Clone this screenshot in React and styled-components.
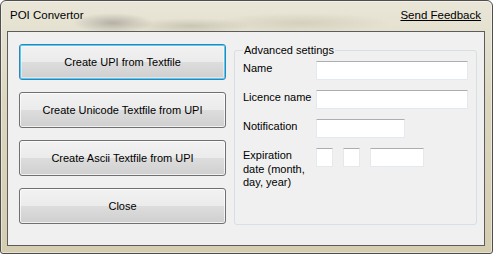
import React from "react";
import styled, { createGlobalStyle } from "styled-components";

const GlobalStyle = createGlobalStyle`
  html, body {
    margin: 0;
    padding: 0;
    background: #ffffff;
  }
  body {
    font-family: "Liberation Sans", Arial, sans-serif;
  }
`;

const Window = styled.div`
  box-sizing: border-box;
  width: 493px;
  height: 254px;
  border: 1px solid #4e4e4e;
  border-radius: 6px 6px 3px 3px;
  background:
    radial-gradient(ellipse 40px 10px at 112px 22px, rgba(120, 118, 110, 0.45), transparent),
    radial-gradient(ellipse 60px 8px at 190px 25px, rgba(150, 145, 125, 0.35), transparent),
    radial-gradient(ellipse 90px 10px at 300px 22px, rgba(170, 165, 140, 0.3), transparent),
    linear-gradient(180deg, #e9e6d8 0%, #dcd6bf 40%, #d4cdb0 100%);
  box-shadow: inset 0 0 0 1px rgba(255, 255, 255, 0.45);
  display: flex;
  flex-direction: column;
  padding: 0 7px 7px 6px;
`;

const TitleBar = styled.div`
  height: 28px;
  display: flex;
  align-items: center;
  justify-content: space-between;
  padding: 0 4px 2px 3px;
  font-size: 11.5px;
  color: #000;
`;

const Title = styled.span``;

const Link = styled.a`
  color: #000;
  text-decoration: underline;
  cursor: pointer;
`;

const Client = styled.div`
  flex: 1;
  border: 1px solid #5c5c5c;
  background: #f0f0f0;
  display: flex;
  gap: 8px;
  padding: 12px 7px 20px 11px;
`;

const ButtonColumn = styled.div`
  width: 207px;
  display: flex;
  flex-direction: column;
  gap: 12px;
`;

const Button = styled.button`
  box-sizing: border-box;
  height: 36px;
  width: 100%;
  font-family: "Liberation Sans", Arial, sans-serif;
  font-size: 11px;
  color: #000;
  border-radius: 3px;
  border: 1px solid ${(p) => (p.$default ? "#3c7fb1" : "#707070")};
  background: linear-gradient(180deg, #f2f2f2 0%, #ebebeb 50%, #dddddd 50%, #cfcfcf 100%);
  box-shadow: ${(p) =>
    p.$default
      ? "inset 0 0 0 1px #48d2fb, inset 0 0 0 2px rgba(255,255,255,0.4)"
      : "inset 0 0 0 1px rgba(255,255,255,0.7)"};
  padding: 0;
`;

const Group = styled.fieldset`
  flex: 1;
  margin: 0;
  border: 1px solid #d5dfe5;
  border-radius: 3px;
  padding: 5px 8px 0 8px;
  display: flex;
  flex-direction: column;
  gap: 10px;
  font-size: 11px;
  color: #000;
`;

const Legend = styled.legend`
  padding: 0 1px;
  font-size: 11px;
`;

const Row = styled.div`
  display: flex;
  align-items: flex-start;
`;

const Label = styled.label`
  width: 73px;
  flex: none;
  line-height: 13.5px;
  padding-top: 1px;
`;

const Inputs = styled.div`
  display: flex;
  gap: 10px;
`;

const Field = styled.input`
  box-sizing: border-box;
  width: ${(p) => p.$w}px;
  height: 19px;
  margin: 0;
  background: #fff;
  border: 1px solid #e3e9ef;
  border-top-color: #abadb3;
  border-radius: 1px;
  padding: 0 2px;
  font-size: 11px;
`;

export default function App() {
  return (
    <>
      <GlobalStyle />
      <Window>
        <TitleBar>
          <Title>POI Convertor</Title>
          <Link>Send Feedback</Link>
        </TitleBar>
        <Client>
          <ButtonColumn>
            <Button $default>Create UPI from Textfile</Button>
            <Button>Create Unicode Textfile from UPI</Button>
            <Button>Create Ascii Textfile from UPI</Button>
            <Button>Close</Button>
          </ButtonColumn>
          <Group>
            <Legend>Advanced settings</Legend>
            <Row>
              <Label>Name</Label>
              <Field $w={152} />
            </Row>
            <Row>
              <Label>Licence name</Label>
              <Field $w={152} />
            </Row>
            <Row>
              <Label>Notification</Label>
              <Field $w={89} />
            </Row>
            <Row>
              <Label>
                Expiration
                <br />
                date (month,
                <br />
                day, year)
              </Label>
              <Inputs>
                <Field $w={17} />
                <Field $w={17} />
                <Field $w={54} />
              </Inputs>
            </Row>
          </Group>
        </Client>
      </Window>
    </>
  );
}
